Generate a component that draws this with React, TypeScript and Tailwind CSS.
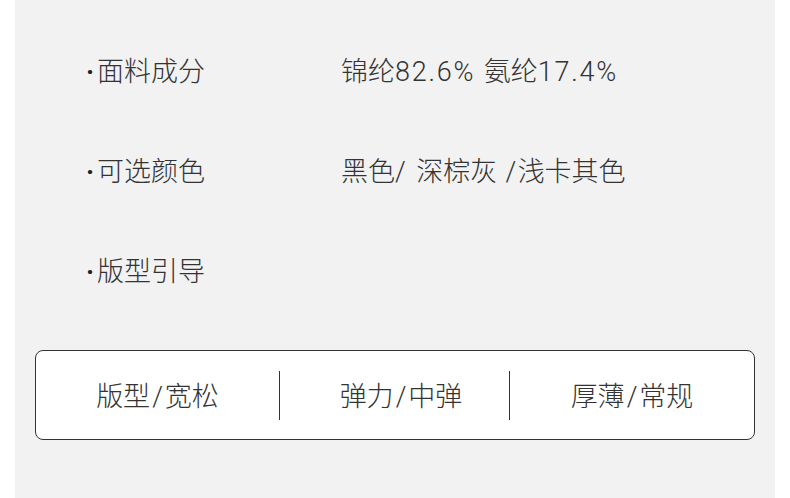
import React from "react";

const font = { fontFamily: 'Roboto, "Noto Sans CJK SC", "Noto Sans", sans-serif' };

const L = ({ children, t = "tracking-[1.8px]" }: { children: React.ReactNode; t?: string }) => (
  <span className={`${t} whitespace-pre`}>{children}</span>
);

const rows: { label: string; value: React.ReactNode }[] = [
  {
    label: "面料成分",
    value: (
      <>
        锦纶<L>82.6% </L>氨纶<L>17.4%</L>
      </>
    ),
  },
  {
    label: "可选颜色",
    value: (
      <>
        黑色<L t="tracking-[2px]">/ </L>深棕灰<L t="tracking-[1.5px]"> /</L>浅卡其色
      </>
    ),
  },
  { label: "版型引导", value: null },
];

export default function App() {
  return (
    <div className="w-[790px] h-[498px] bg-white overflow-hidden" style={font}>
      <div className="mx-[15px] w-[760px] h-[498px] bg-[#f2f2f2] pt-[22px]">
        {rows.map((r) => (
          <div key={r.label} className="h-[100px] flex items-center text-[27px] font-light text-[#333]">
            <div className="w-[326px] pl-[71px] whitespace-pre flex items-center">
              <span className="inline-block w-[11px] font-bold text-[#222]">·</span>
              <span>{r.label}</span>
            </div>
            <div className="whitespace-pre">{r.value}</div>
          </div>
        ))}
        <div className="mt-[28px] mx-[20px] h-[90px] rounded-[8px] border border-[#333] bg-white flex items-center text-[27px] font-light text-[#333]">
          <div className="w-[243px] text-center pt-[4px]">
            版型<L t="tracking-[0px] mx-[2px]">/</L>宽松
          </div>
          <div className="w-px h-[49px] bg-[#333]" />
          <div className="w-[229px] text-center pl-[13px] pt-[4px]">
            弹力<L t="tracking-[0px] mx-[2px]">/</L>中弹
          </div>
          <div className="w-px h-[49px] bg-[#333]" />
          <div className="flex-1 text-center pt-[4px]">
            厚薄<L t="tracking-[0px] mx-[2px]">/</L>常规
          </div>
        </div>
      </div>
    </div>
  );
}
